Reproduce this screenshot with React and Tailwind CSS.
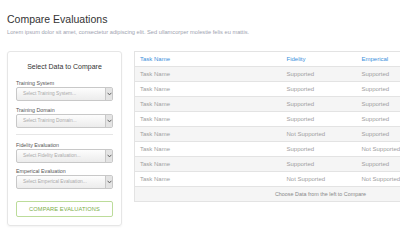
import React from "react";

const rows = [
  ["Supported", "Supported"],
  ["Supported", "Supported"],
  ["Supported", "Supported"],
  ["Supported", "Supported"],
  ["Not Supported", "Supported"],
  ["Supported", "Not Supported"],
  ["Supported", "Supported"],
  ["Not Supported", "Not Supported"],
];

function Chevron() {
  return (
    <svg width="5" height="4" viewBox="0 0 5 4">
      <path d="M0.6 0.8 L2.5 2.9 L4.4 0.8" fill="none" stroke="#555" strokeWidth="0.9" />
    </svg>
  );
}

function SelectBox({ label, placeholder }) {
  return (
    <div className="flex flex-col">
      <span className="text-[5.3px] leading-[7px] text-[#555]">{label}</span>
      <div className="flex h-[14px] border border-[#c8c8c8] rounded-[2px] bg-gradient-to-b from-[#fdfdfd] to-[#ececec]">
        <span className="flex-1 pl-[6px] text-[4.8px] leading-[12px] text-[#aaa]">{placeholder}</span>
        <span className="w-[7px] flex items-center justify-center border-l border-[#c8c8c8] bg-[#e4e4e4]">
          <Chevron />
        </span>
      </div>
    </div>
  );
}

export default function App() {
  return (
    <div className="w-[400px] h-[240px] overflow-hidden bg-white font-['Liberation_Sans',Arial,sans-serif]">
      <div className="pl-[7px] pt-[12px]">
        <h1 className="text-[10.5px] leading-[14px] text-[#333]">Compare Evaluations</h1>
        <p className="text-[5.7px] leading-[8px] text-[#a0a3b0] mt-[2px]">
          Lorem ipsum dolor sit amet, consectetur adipiscing elit. Sed ullamcorper molestie felis eu mattis.
        </p>
      </div>

      <div className="flex mt-[15px] pl-[7px] gap-[12px]">
        {/* Left panel */}
        <div className="w-[115px] shrink-0 border border-[#e6e6e6] rounded-[3px] shadow-[0_1px_2px_rgba(0,0,0,0.05)] px-[8px] pb-[7px]">
          <h2 className="text-center text-[7px] leading-[9px] text-[#333] mt-[10px]">Select Data to Compare</h2>
          <div className="mt-[9px] flex flex-col gap-[6px]">
            <SelectBox label="Training System" placeholder="Select Training System..." />
            <SelectBox label="Training Domain" placeholder="Select Training Domain..." />
          </div>
          <div className="border-t border-[#e6e6e6] mt-[6px] mb-[7px]" />
          <div className="flex flex-col gap-[5px]">
            <SelectBox label="Fidelity Evaluation" placeholder="Select Fidelity Evaluation..." />
            <SelectBox label="Emperical Evaluation" placeholder="Select Emperical Evaluation..." />
          </div>
          <button className="mt-[12px] w-full h-[16px] border border-[#bcdc9a] rounded-[2px] text-[5.7px] text-[#7aae48] tracking-[0.1px]">
            COMPARE EVALUATIONS
          </button>
        </div>

        {/* Table */}
        <div className="flex-1 overflow-hidden">
          <table className="w-[372px] border-collapse border border-[#e3e3e3] text-[6px] table-fixed">
            <colgroup>
              <col className="w-[147px]" />
              <col className="w-[75px]" />
              <col className="w-[150px]" />
            </colgroup>
            <thead>
              <tr className="h-[15px] text-left text-[#3d8fdb]">
                <th className="font-normal pl-[5px]">Task Name</th>
                <th className="font-normal pl-[5px]">Fidelity</th>
                <th className="font-normal pl-[5px]">Emperical</th>
              </tr>
            </thead>
            <tbody className="text-[#a0a0a0]">
              {rows.map((r, i) => (
                <tr key={i} className={`h-[15px] border-t border-[#e3e3e3] ${i % 2 === 0 ? "bg-[#f5f5f5]" : "bg-white"}`}>
                  <td className="pl-[5px]">Task Name</td>
                  <td className="pl-[5px]">{r[0]}</td>
                  <td className="pl-[5px]">{r[1]}</td>
                </tr>
              ))}
              <tr className="h-[15px] border-t border-[#e3e3e3] bg-[#f5f5f5]">
                <td colSpan={3} className="text-center text-[5.4px] text-[#888]">Choose Data from the left to Compare</td>
              </tr>
            </tbody>
          </table>
        </div>
      </div>
    </div>
  );
}
